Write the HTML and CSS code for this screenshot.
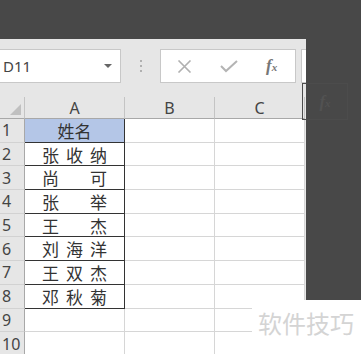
FILE: index.html
```html
<!DOCTYPE html>
<html lang="zh-CN">
<head>
    <meta charset="UTF-8">
    <title>姓名</title>
    <link rel="stylesheet" href="styles.css">
</head>
<body>
    <div class="top"></div>
    <div class="main">
        <div class="window">
            <div class="formula-bar">
                <div class="namebox">
                    <span>D11</span>
                    <span class="caret"></span>
                </div>
                <div class="dots"><i></i><i></i><i></i></div>
                <div class="fbox">
                    <svg class="ico" width="15" height="13" viewBox="0 0 15 13"><path d="M1.5 0.5 L13.5 12.5 M13.5 0.5 L1.5 12.5" stroke="#b0b0b0" stroke-width="1.6" fill="none"/></svg>
                    <svg class="ico" width="18" height="13" viewBox="0 0 18 13"><path d="M1 6 L6 11 L17 1" stroke="#b4b4b4" stroke-width="2" fill="none"/></svg>
                    <span class="fx">f<small>x</small></span>
                </div>
                <div class="fbox rest"></div>
            </div>
            <div class="sheet">
                <div class="hd corner"><span class="tri"></span></div>
                <div class="hd col">A</div>
                <div class="hd col">B</div>
                <div class="hd col">C</div>

                <div class="rh">1</div><div class="c a head">姓名</div><div class="c"></div><div class="c"></div>
                <div class="rh">2</div><div class="c a"><span>张</span><span>收</span><span>纳</span></div><div class="c"></div><div class="c"></div>
                <div class="rh">3</div><div class="c a"><span>尚</span><span>可</span></div><div class="c"></div><div class="c"></div>
                <div class="rh">4</div><div class="c a"><span>张</span><span>举</span></div><div class="c"></div><div class="c"></div>
                <div class="rh">5</div><div class="c a"><span>王</span><span>杰</span></div><div class="c"></div><div class="c"></div>
                <div class="rh">6</div><div class="c a"><span>刘</span><span>海</span><span>洋</span></div><div class="c"></div><div class="c"></div>
                <div class="rh">7</div><div class="c a"><span>王</span><span>双</span><span>杰</span></div><div class="c"></div><div class="c"></div>
                <div class="rh">8</div><div class="c a"><span>邓</span><span>秋</span><span>菊</span></div><div class="c"></div><div class="c"></div>
                <div class="rh">9</div><div class="c"></div><div class="c"></div><div class="c"></div>
                <div class="rh">10</div><div class="c"></div><div class="c"></div><div class="c"></div>
            </div>
        </div>
        <div class="side">
            <div class="ghost"><span class="fx">f<small>x</small></span></div>
        </div>
    </div>
    <div class="watermark">软件技巧</div>
</body>
</html>
```

FILE: styles.css
```css
body {
    margin: 0;
    width: 361px;
    height: 354px;
    overflow: hidden;
    background-color: #484848;
    font-family: "Noto Sans", "Noto Sans CJK SC", sans-serif;
    position: relative;
}
.top {
    height: 39px;
}
.main {
    display: flex;
    height: 315px;
}
.window {
    width: 306px;
    flex-shrink: 0;
    background-color: #e6e6e6;
    overflow: hidden;
}
.formula-bar {
    display: flex;
    align-items: flex-start;
    height: 58px;
    padding-top: 10px;
    box-sizing: border-box;
}
.formula-bar > * {
    flex-shrink: 0;
}
.namebox {
    width: 121px;
    height: 34px;
    box-sizing: border-box;
    background-color: #fff;
    border: 1px solid #c8c8c8;
    border-left: none;
    display: flex;
    align-items: center;
    justify-content: space-between;
    padding: 0 8px 0 3px;
    font-size: 15px;
    color: #444;
}
.caret {
    width: 0;
    height: 0;
    border-left: 4px solid transparent;
    border-right: 4px solid transparent;
    border-top: 4px solid #666;
}
.dots {
    width: 39px;
    height: 34px;
    display: flex;
    flex-direction: column;
    align-items: center;
    justify-content: center;
    gap: 3px;
}
.dots i {
    width: 2px;
    height: 2px;
    background-color: #b0b0b0;
}
.fbox {
    width: 136px;
    height: 34px;
    box-sizing: border-box;
    background-color: #fff;
    border: 1px solid #c8c8c8;
    display: flex;
    align-items: center;
    padding-left: 16px;
    gap: 28px;
}
.fbox.rest {
    width: 20px;
    margin-left: 5px;
}
.fx {
    font-family: "Liberation Serif", serif;
    font-style: italic;
    font-weight: bold;
    font-size: 17px;
    color: #777;
}
.fx small {
    font-size: 11px;
}
.sheet {
    display: grid;
    grid-template-columns: 25px 100px 90px 90px;
    grid-template-rows: 22px repeat(10, 23.7px);
}
.hd {
    box-sizing: border-box;
    border-bottom: 1px solid #a8a8a8;
    border-right: 1px solid #c4c4c4;
    background-color: #e6e6e6;
    font-size: 16px;
    color: #444;
    display: flex;
    align-items: center;
    justify-content: center;
}
.hd.corner {
    align-items: flex-end;
    justify-content: flex-end;
    padding: 0 3px 3px 0;
}
.tri {
    width: 0;
    height: 0;
    border-left: 11px solid transparent;
    border-bottom: 11px solid #c0c0c0;
}
.rh {
    box-sizing: border-box;
    background-color: #e6e6e6;
    border-right: 1px solid #a8a8a8;
    border-bottom: 1px solid #d2d2d2;
    font-size: 16px;
    color: #444;
    padding-left: 2px;
    display: flex;
    align-items: center;
}
.c {
    box-sizing: border-box;
    background-color: #fff;
    border-right: 1px solid #d6d6d6;
    border-bottom: 1px solid #d6d6d6;
}
.c.a {
    border-color: #333;
}
.rh:nth-child(n+37) + .c {
    border-color: #d6d6d6;
}
.a {
    display: flex;
    align-items: center;
    justify-content: space-between;
    padding: 0 17px;
    font-family: "Noto Sans CJK SC", sans-serif;
    font-size: 17px;
    color: #333;
}
.a.head {
    justify-content: center;
    background-color: #b4c6e7;
}
.side {
    flex: 1;
    height: 261px;
    padding-top: 44px;
}
.ghost {
    width: 44px;
    height: 35px;
    margin-left: -4px;
    border: 1px solid #4c4c4c;
    display: flex;
    align-items: center;
    justify-content: center;
}
.ghost .fx {
    color: #525252;
}
.watermark {
    position: absolute;
    left: 252px;
    top: 300px;
    width: 109px;
    height: 54px;
    background-color: #fff;
    box-sizing: border-box;
    padding: 5px 0 0 6px;
    font-family: "Noto Sans CJK SC", sans-serif;
    font-size: 24px;
    color: #d4d4d4;
}
```
